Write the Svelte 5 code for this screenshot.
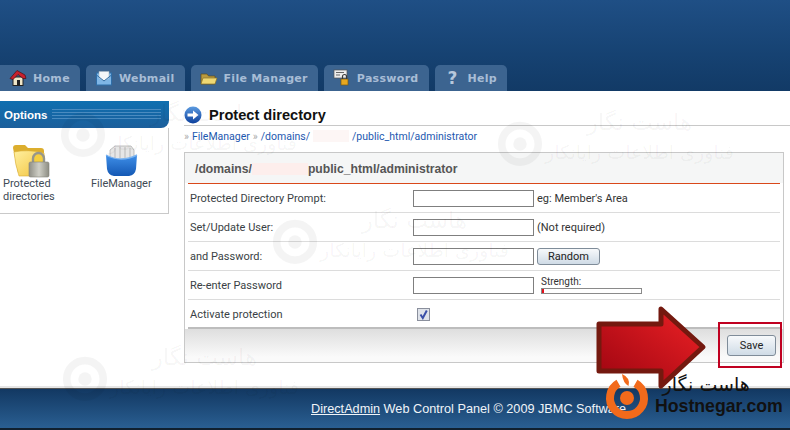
<script>
  let tabs = [
    { id: "home", label: "Home" },
    { id: "mail", label: "Webmail" },
    { id: "folder", label: "File Manager" },
    { id: "key", label: "Password" },
    { id: "help", label: "Help" }
  ];
  let marks = [
    { x: 58, y: 108 },
    { x: 495, y: 117 },
    { x: 270, y: 215 },
    { x: 60, y: 352 }
  ];
</script>

<div class="page">
  <header class="top">
    <nav class="tabs">
      {#each tabs as t}
        <div class="tab">
          <span class="tab-icon">
            {#if t.id === "home"}
              <svg width="18" height="18" viewBox="0 0 18 18">
                <rect x="4" y="8" width="10" height="8.5" fill="#efe6c8" stroke="#222" />
                <path d="M1 9.5 L8 1.5 L16 6 L17 9.5 L14 9.5 L9 5.5 L4 10.5 Z" fill="#c8202c" stroke="#4a1015" stroke-width=".7" />
                <rect x="8" y="11" width="3" height="5.5" fill="#222" />
              </svg>
            {:else if t.id === "mail"}
              <svg width="18" height="18" viewBox="0 0 18 18">
                <rect x="1.5" y="4" width="15" height="12" fill="#7fb6e6" stroke="#2f6ea8" />
                <path d="M4 9 V2.5 H14 V9 L9 12 Z" fill="#f4f7fa" stroke="#aab8c4" stroke-width=".6" />
                <path d="M1.5 6 L9 12 L16.5 6" fill="none" stroke="#2f6ea8" />
              </svg>
            {:else if t.id === "folder"}
              <svg width="18" height="18" viewBox="0 0 18 18">
                <path d="M1 5 H7 L8.5 7 H15 V15 H1 Z" fill="#b99a3e" stroke="#5c4c1c" stroke-width=".7" />
                <path d="M1 15 L3 9 H17 L15 15 Z" fill="#efd873" stroke="#8a7428" stroke-width=".7" />
              </svg>
            {:else if t.id === "key"}
              <svg width="18" height="18" viewBox="0 0 18 18">
                <rect x="1" y="1" width="13" height="8" fill="#eeeeee" stroke="#555" stroke-width=".7" />
                <path d="M3 3.5 H11 M3 6 H7" stroke="#666" />
                <rect x="8" y="10" width="7" height="6" fill="#e8a820" stroke="#7a5a10" stroke-width=".7" />
                <path d="M9.5 10 V7.5 A2 2 0 0 1 13.5 7.5 V10" fill="none" stroke="#3a3a3a" stroke-width="1.2" />
              </svg>
            {:else}
              <span class="qmark">?</span>
            {/if}
          </span>
          <span>{t.label}</span>
        </div>
      {/each}
    </nav>
  </header>

  <div class="body">
    <aside class="side">
      <div class="side-bar">
        <b>Options</b>
        <span class="stripes"></span>
      </div>
      <div class="side-items">
        <div class="side-item first">
          <svg width="38" height="34" viewBox="0 0 38 34">
            <defs>
              <linearGradient id="fold" x1="0" y1="0" x2="1" y2="1">
                <stop offset="0" stop-color="#fff0a0" />
                <stop offset="1" stop-color="#f2c23a" />
              </linearGradient>
              <linearGradient id="lock" x1="0" y1="0" x2="1" y2="0">
                <stop offset="0" stop-color="#8f8f86" />
                <stop offset=".5" stop-color="#cfcfc6" />
                <stop offset="1" stop-color="#8c8c82" />
              </linearGradient>
            </defs>
            <path d="M1 4 Q1 1 4 1 H13 L16 4 H29 Q32 4 32 7 V29 H6 Z" fill="#dcae2e" />
            <path d="M2 8 Q16 5 32 9 Q34 20 30 32 H7 Q3 20 2 8 Z" fill="url(#fold)" stroke="#d9ad34" stroke-width=".6" />
            <path d="M21 19 V14.5 A5.5 5.5 0 0 1 32 14.5 V19" fill="#f5cf3f" stroke="#96968c" stroke-width="2.4" />
            <rect x="17" y="18" width="20" height="15" rx="1.5" fill="url(#lock)" stroke="#85857b" stroke-width=".6" />
          </svg>
          <span>Protected<br />directories</span>
        </div>
        <div class="side-item second">
          <svg width="33" height="33" viewBox="0 0 33 33">
            <defs>
              <linearGradient id="tray" x1="0" y1="0" x2="0" y2="1">
                <stop offset="0" stop-color="#3f8fe8" />
                <stop offset="1" stop-color="#1458b4" />
              </linearGradient>
            </defs>
            <path d="M5 6 L10 2 H26 L29 6 V18 H5 Z" fill="#e6e6e6" stroke="#a8a8a8" stroke-width=".7" />
            <path d="M10 4 V14 M15 3 V14 M20 3 V14 M25 4 V14" stroke="#b8b8b8" />
            <path d="M1 11 Q16 19 32 11 L31 25 Q30 31 24 32 H9 Q3 31 2 25 Z" fill="url(#tray)" />
            <path d="M1 11 Q16 19 32 11" fill="none" stroke="#7cb4f0" stroke-width="1.4" />
          </svg>
          <span>FileManager</span>
        </div>
      </div>
    </aside>

    <main class="main">
      <div class="title">
        <svg width="18" height="18" viewBox="0 0 18 18">
          <defs>
            <linearGradient id="ball" x1="0" y1="0" x2="0" y2="1">
              <stop offset="0" stop-color="#5c9be0" />
              <stop offset="1" stop-color="#0c3f9c" />
            </linearGradient>
          </defs>
          <circle cx="9" cy="9" r="8.5" fill="url(#ball)" />
          <path d="M3.5 7.5 H9 V4.5 L14.5 9 L9 13.5 V10.5 H3.5 Z" fill="#fff" />
        </svg>
        <h1>Protect directory</h1>
      </div>
      <div class="crumbs">
        <span class="sep">»</span>
        <span class="link">FileManager</span>
        <span class="sep">»</span>
        <span class="link">/domains/</span>
        <i class="blur-link"></i>
        <span class="link">/public_html/administrator</span>
      </div>

      <section class="panel">
        <div class="panel-head">/domains/<i class="blur-head"></i>public_html/administrator</div>
        <div class="row">
          <label for="p1">Protected Directory Prompt:</label>
          <div class="cell"><input id="p1" type="text" /><span class="hint">eg: Member's Area</span></div>
        </div>
        <div class="row">
          <label for="p2">Set/Update User:</label>
          <div class="cell"><input id="p2" type="text" /><span class="hint">(Not required)</span></div>
        </div>
        <div class="row">
          <label for="p3">and Password:</label>
          <div class="cell"><input id="p3" type="text" /><button class="btn random">Random</button></div>
        </div>
        <div class="row">
          <label for="p4">Re-enter Password</label>
          <div class="cell">
            <input id="p4" type="text" />
            <div class="strength">
              <small>Strength:</small>
              <div class="meter"><span></span></div>
            </div>
          </div>
        </div>
        <div class="row last">
          <label for="p5">Activate protection</label>
          <div class="cell">
            <span class="check" id="p5">
              <svg width="13" height="13" viewBox="0 0 13 13">
                <path d="M3.5 6.5 L5.8 10 L9.8 2.5" fill="none" stroke="#3a4fa8" stroke-width="2" />
              </svg>
            </span>
          </div>
        </div>
        <div class="panel-foot">
          <button class="btn save">Save</button>
        </div>
      </section>
    </main>
  </div>

  <footer class="foot">
    <span><u>DirectAdmin</u> Web Control Panel © 2009 JBMC Software</span>
  </footer>

  {#each marks as m}
    <div class="mark" style="left:{m.x}px;top:{m.y}px">
      <svg width="50" height="50" viewBox="0 0 52 52">
        <circle cx="26" cy="28" r="19" fill="none" stroke="currentColor" stroke-width="8" />
        <circle cx="26" cy="28" r="7" fill="currentColor" />
      </svg>
      <div class="mark-text" dir="rtl">
        <span class="mark-a">هاست نگار</span>
        <span class="mark-b">فناوری اطلاعات رایانکار</span>
      </div>
    </div>
  {/each}

  <svg class="arrow" width="112" height="86" viewBox="0 0 112 86">
    <defs>
      <linearGradient id="red" x1="0" y1="1" x2="1" y2="0">
        <stop offset="0" stop-color="#9c0410" />
        <stop offset="1" stop-color="#ee2226" />
      </linearGradient>
    </defs>
    <path d="M4 20 H66 V5 L108 43 L66 82 V67 H4 Z" fill="url(#red)" stroke="#74190f" stroke-width="5" stroke-linejoin="round" />
  </svg>
  <div class="red-box"></div>

  <div class="logo">
    <svg width="46" height="48" viewBox="0 0 46 48">
      <path d="M14.5 10.3 A17 17 0 1 0 31.5 10.3" fill="none" stroke="#f26a1b" stroke-width="8" />
      <path d="M18 1 Q27 5 24.5 13 Q19 10 18 1 Z" fill="#f26a1b" />
      <circle cx="23" cy="25" r="7" fill="#f26a1b" />
    </svg>
    <div class="logo-text">
      <span class="logo-fa" dir="rtl">هاست نگار</span>
      <span class="logo-en">Hostnegar.com</span>
    </div>
  </div>
</div>

<style>
  :global(body) {
    margin: 0;
    background: #fff;
  }

  .page {
    position: relative;
    width: 790px;
    height: 430px;
    overflow: hidden;
    display: flex;
    flex-direction: column;
    font-family: Roboto, "Liberation Sans", sans-serif;
    font-size: 11px;
    color: #333;
    background: #fff;
  }

  .top {
    height: 91px;
    box-sizing: border-box;
    flex: none;
    background: linear-gradient(to bottom, #1f4f85, #164272 60%, #123a66);
    display: flex;
    align-items: flex-end;
  }

  .tabs {
    display: flex;
    gap: 6px;
  }

  .tab {
    display: flex;
    align-items: center;
    gap: 6px;
    height: 26px;
    padding: 0 10px 0 9px;
    background: #3c6490;
    border-radius: 5px 5px 0 0;
    font-family: "DejaVu Sans", sans-serif;
    font-weight: bold;
    font-size: 11px;
    letter-spacing: 0.3px;
    color: #a8bdd6;
  }

  .tab:first-child {
    border-top-left-radius: 0;
  }

  .tab-icon {
    display: flex;
    width: 18px;
    justify-content: center;
  }

  .qmark {
    font-size: 17px;
    line-height: 18px;
    color: #b7c8dc;
  }

  .body {
    flex: 1;
    display: flex;
    min-height: 0;
  }

  .side {
    width: 169px;
    flex: none;
    padding-top: 10px;
  }

  .side-bar {
    height: 27px;
    display: flex;
    align-items: center;
    gap: 5px;
    padding: 0 8px 0 4px;
    box-sizing: border-box;
    background: linear-gradient(to bottom, #0f6fb0, #1c5f9b);
    border-radius: 0 0 8px 0;
    color: #fff;
  }

  .side-bar b {
    font-family: "Liberation Sans", sans-serif;
    font-size: 11.5px;
  }

  .stripes {
    flex: 1;
    height: 11px;
    background: repeating-linear-gradient(to bottom, #4a8bc0 0 1px, transparent 1px 3px);
  }

  .side-items {
    height: 86px;
    box-sizing: border-box;
    border-right: 1px solid #c9c9c9;
    border-bottom: 1px solid #c9c9c9;
    display: flex;
    padding-top: 16px;
    color: #404a55;
    line-height: 13px;
  }

  .side-item {
    display: flex;
    flex-direction: column;
  }

  .side-item.first {
    width: 91px;
    padding-left: 3px;
    box-sizing: border-box;
  }

  .side-item.first span {
    margin-top: -1px;
  }

  .side-item.first svg {
    margin-left: 9px;
  }

  .side-item.second svg {
    margin-left: 14px;
  }

  .main {
    flex: 1;
    padding: 13px 6px 0 15px;
    min-width: 0;
  }

  .title {
    display: flex;
    align-items: center;
    gap: 7px;
    height: 21px;
    border-bottom: 1px solid #c8c8c8;
    margin-right: -6px;
  }

  h1 {
    margin: 0;
    font-family: "Liberation Sans", sans-serif;
    font-size: 14.6px;
    font-weight: bold;
    color: #111;
  }

  .crumbs {
    height: 26px;
    display: flex;
    align-items: center;
    gap: 3px;
    padding-bottom: 6px;
    box-sizing: border-box;
    font-size: 10.5px;
    white-space: nowrap;
  }

  .sep {
    color: #aaa;
  }

  .link {
    color: #1d58b0;
  }

  .blur-link {
    width: 36px;
    height: 12px;
    background: #fdf6f5;
  }

  .panel {
    border: 1px solid #c8c8c8;
    height: 211px;
    box-sizing: border-box;
    padding: 0 3px;
    display: flex;
    flex-direction: column;
    background: rgba(255, 255, 255, 0.4);
  }

  .panel-head {
    height: 30px;
    margin: 0 -3px;
    padding-left: 10px;
    line-height: 33px;
    background: #f5f6f6;
    font-family: "Liberation Sans", sans-serif;
    font-weight: bold;
    font-size: 12.2px;
    color: #555;
    flex: none;
  }

  .blur-head {
    display: inline-block;
    width: 56px;
    height: 12px;
    background: #fdeeec;
    vertical-align: -2px;
  }

  .row {
    display: flex;
    align-items: center;
    height: 29px;
    box-sizing: border-box;
    border-bottom: 1px solid #dcdcdc;
    padding: 1px 0 0 2px;
    flex: none;
  }

  .panel-head + .row {
    border-top: 1px solid #d9481a;
    height: 30px;
  }

  .row.last {
    border-bottom: 2px solid #bdbdbd;
  }

  label {
    width: 223px;
    color: #3a3f45;
    flex: none;
  }

  .cell {
    display: flex;
    align-items: center;
  }

  input {
    width: 121px;
    height: 17px;
    box-sizing: border-box;
    border: 1px solid #7f7f7f;
    margin: 0;
    padding: 0;
    background: #fff;
  }

  .hint {
    margin-left: 3px;
  }

  .btn {
    font-family: Roboto, "Liberation Sans", sans-serif;
    font-size: 11px;
    color: #222;
    border: 1px solid #7f8c99;
    border-radius: 3px;
    background: linear-gradient(to bottom, #f7f9fb, #cfdbe6);
    padding: 0;
  }

  .random {
    width: 63px;
    height: 17px;
    margin-left: 3px;
  }

  .strength {
    margin-left: 7px;
    display: flex;
    flex-direction: column;
  }

  .strength small {
    font-size: 10px;
    line-height: 10px;
    height: 11px;
  }

  .meter {
    width: 101px;
    height: 6px;
    box-sizing: border-box;
    border: 1px solid #8a8a8a;
    background: #fff;
  }

  .meter span {
    display: block;
    width: 2px;
    height: 4px;
    background: #e3101c;
  }

  .check {
    margin-left: 4px;
    width: 13px;
    height: 13px;
    display: block;
    box-sizing: border-box;
    border: 1px solid #8a8f9c;
    background: #dfe3ea;
  }

  .check svg {
    display: block;
    margin: -1px;
  }

  .panel-foot {
    flex: 1;
    display: flex;
    justify-content: flex-end;
    align-items: center;
    padding-right: 3px;
    background: linear-gradient(to bottom, #dedede, #fafafa 85%);
    margin: 0 -3px;
  }

  .save {
    width: 49px;
    height: 21px;
    margin-right: 4px;
  }

  .foot {
    flex: none;
    height: 42px;
    box-sizing: border-box;
    border-top: 1px solid #555;
    border-bottom: 2px solid #10202f;
    box-shadow: 0 -2px 0 #e6e6e6;
    background: linear-gradient(to bottom, #123862, #2a5f92);
    color: #f0f4f8;
    display: flex;
    align-items: center;
    padding-left: 311px;
    font-family: "Liberation Sans", sans-serif;
    font-size: 12.7px;
    white-space: nowrap;
  }

  .mark {
    position: absolute;
    display: flex;
    color: rgba(0, 0, 0, 0.045);
    pointer-events: none;
  }

  .mark-text {
    display: flex;
    flex-direction: column;
    align-items: center;
    font-family: "DejaVu Sans", sans-serif;
    white-space: nowrap;
    margin-top: -8px;
    gap: 6px;
  }

  .mark-a {
    font-size: 23px;
  }

  .mark-b {
    font-size: 19px;
  }

  .arrow {
    position: absolute;
    left: 595px;
    top: 304px;
  }

  .red-box {
    position: absolute;
    left: 718px;
    top: 322px;
    width: 64px;
    height: 46px;
    box-sizing: border-box;
    border: 2px solid #c00020;
  }

  .logo {
    position: absolute;
    left: 604px;
    top: 373px;
    display: flex;
    gap: 5px;
  }

  .logo-text {
    display: flex;
    flex-direction: column;
    align-items: flex-end;
    color: #111;
    line-height: 22px;
  }

  .logo-fa {
    font-family: "DejaVu Sans", sans-serif;
    font-size: 19px;
    margin-right: 33px;
  }

  .logo-en {
    font-family: "Liberation Sans", sans-serif;
    font-weight: bold;
    font-size: 17.7px;
  }
</style>
